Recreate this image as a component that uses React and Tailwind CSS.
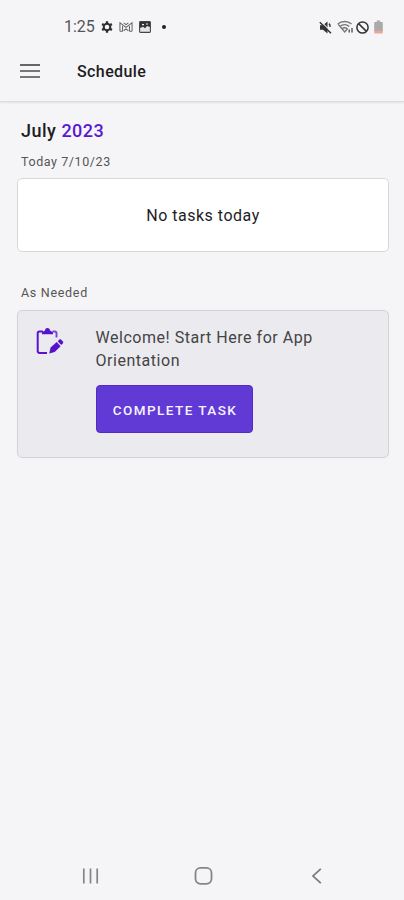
function StatusBar() {
  return (
    <div className="flex h-[44px] items-center pt-[10px] pl-[64px] pr-[21px] text-[#444]">
      <span className="w-[31px] whitespace-nowrap text-[16px] leading-[20px] text-[#555]">1:25</span>
      <svg className="ml-[6px] h-[12px] w-[12px]" viewBox="0 0 12 12" fill="none" stroke="#2d2d2d">
        <circle cx="6" cy="6" r="3.3" strokeWidth="2" />
        <path d="M6 .3v2M6 9.7v2M1.1 3.1l1.6 1M9.3 8l1.6 1M1.1 9l1.6-1M9.3 4l1.6-.9" strokeWidth="2.3" />
      </svg>
      <svg className="ml-[6px] h-[12px] w-[14px]" viewBox="0 0 15 12" fill="none" stroke="#666">
        <path d="M1 10.5v-9l6.5 5 6.5-5v9M3.8 10.5V5M11.2 10.5V5M1 10.5h3M11 10.5h3M5 1.5l2.5 2 2.5-2M5 10l2.5-2 2.5 2" strokeWidth="1.1" />
      </svg>
      <svg className="ml-[6px] h-[12px] w-[12px]" viewBox="0 0 12 12">
        <rect x=".6" y=".6" width="10.8" height="10.8" rx=".8" fill="#e4e4e6" stroke="#444" strokeWidth="1.1" />
        <path d="M1 1h10v5L8 5 6 7.2 4 5.8 1 7z" fill="#333" />
        <path d="M3 3h2v1.2H3zM7 2.5h2v1H7z" fill="#eee" />
      </svg>
      <span className="ml-[11px] h-[4px] w-[4px] rounded-full bg-[#222]" />
      <svg className="ml-auto h-[13px] w-[13px]" viewBox="0 0 13 13">
        <path d="M1 4.2h3l4.5-3.6v11.8L4 8.8H1z" fill="#333" />
        <path d="M2 .6 13 11.4" stroke="#f5f5f8" strokeWidth="1.1" />
        <path d="M.8 1.2 12 12.2M10 2.6c.9.8 1.2 1.9 1 3.2" fill="none" stroke="#333" strokeWidth="1.5" />
      </svg>
      <svg className="ml-[5px] h-[14px] w-[17px]" viewBox="0 0 17 14" fill="none" stroke="#777">
        <path d="M.8 4C4.5.7 10.8.7 14.5 4M3 6.5c2.7-2.4 6.6-2.4 9.3 0M5 8.8c1.6-1.3 3.7-1.3 5.3 0M1 4l6.7 8 3-3.5" strokeWidth="1.4" />
        <path d="M12.2 12.5V9.5M15 8v4.5" stroke="#555" strokeWidth="1.4" />
      </svg>
      <svg className="ml-[2px] h-[13px] w-[13px]" viewBox="0 0 13 13" fill="none" stroke="#333" strokeWidth="1.5">
        <circle cx="6.5" cy="6.5" r="5.6" />
        <path d="m2.6 2.6 7.8 7.8" />
      </svg>
      <svg className="ml-[5px] h-[14px] w-[9px]" viewBox="0 0 9 14">
        <path d="M2.8.5h3.4V2H8a.8.8 0 0 1 .8.8V11H.2V2.8A.8.8 0 0 1 1 2h1.8z" fill="#aaa" />
        <path d="M.2 10.8h8.6v1.7a1 1 0 0 1-1 1H1.2a1 1 0 0 1-1-1z" fill="#f1a493" />
      </svg>
    </div>
  );
}

function TaskIcon() {
  return (
    <svg className="mt-[16px] ml-[18px] h-[28px] w-[28px] shrink-0" viewBox="0 0 28 28" fill="none">
      <path d="M7 4.5H3.5a1.8 1.8 0 0 0-1.8 1.8v17.8a1.8 1.8 0 0 0 1.8 1.8H11" stroke="#5b14ce" strokeWidth="2" />
      <path d="M16.5 4.5h2.2a1.8 1.8 0 0 1 1.8 1.8v4.2" stroke="#7a44d4" strokeWidth="1.9" />
      <path d="M6 7.2V5.3l3-1.8C9.2 1.8 10.1 1 11.5 1s2.3.8 2.5 2.5l3 1.8v1.9z" fill="#5712cc" />
      <path d="m13.2 26.6 1.4-6 6.1-5.5 3.9 4.1-5.9 5.7z" fill="#5712cc" />
      <path d="m21.7 14.3 1.8-1.7c.6-.5 1.2-.5 1.8.1l1.6 1.7c.5.6.5 1.2 0 1.8l-1.7 1.7z" fill="#5712cc" />
    </svg>
  );
}

export default function App() {
  return (
    <div className="flex h-[900px] w-[404px] flex-col overflow-hidden bg-[#f5f5f8] font-['Roboto',sans-serif] text-[#1d1d1f]">
      <StatusBar />
      <header className="flex h-[58px] items-center border-b border-[#dcdcdf] pb-[2px] pl-[20px] shadow-[0_1px_2px_rgba(0,0,0,0.08)]">
        <div className="flex w-[20px] flex-col gap-[4px] pb-px">
          <span className="h-[2px] bg-[#666]" />
          <span className="h-[2px] bg-[#777]" />
          <span className="h-[2px] bg-[#777]" />
        </div>
        <h1 className="ml-[37px] pt-px text-[16px] leading-[20px] font-medium tracking-[0.4px]">Schedule</h1>
      </header>
      <main className="flex flex-1 flex-col pr-[15px] pl-[17px]">
        <h2 className="mt-[18px] ml-[4px] text-[18px] leading-[22px] font-medium tracking-[0.5px]">
          July <span className="text-[#5b18d0]">2023</span>
        </h2>
        <p className="mt-[11px] ml-[4px] text-[12.5px] leading-[17px] tracking-[0.58px] text-[#555]">Today 7/10/23</p>
        <section className="mt-[8px] flex h-[74px] items-center justify-center rounded-[5px] border border-[#d8d8da] bg-white pt-[2px] text-[16px] tracking-[0.5px]">
          No tasks today
        </section>
        <p className="mt-[33px] ml-[4px] text-[12.5px] leading-[16px] tracking-[0.7px] text-[#555]">As Needed</p>
        <section className="mt-[9px] flex h-[148px] rounded-[5px] border border-[#d3d3d6] bg-[#ebeaef]">
          <TaskIcon />
          <div className="ml-[31.5px] flex flex-col items-start pt-[15px]">
            <p className="w-[240px] text-[16px] leading-[23px] tracking-[0.53px] text-[#444]">
              Welcome! Start Here for App<br />Orientation
            </p>
            <button className="mt-[13px] h-[48px] w-[157px] rounded-[4px] border border-[#532bc4] bg-[#613ad6] pt-[2px] pl-[2px] text-[13.5px] font-medium tracking-[1.45px] whitespace-nowrap text-[#f6f3fd]">
              COMPLETE TASK
            </button>
          </div>
        </section>
      </main>
      <nav className="flex h-[48px] items-center pl-[82px]">
        <svg className="h-[18px] w-[18px]" viewBox="0 0 18 18" stroke="#858588" strokeWidth="1.7">
          <path d="M1.8 1.5v15M8.5 1.5v15M15.2 1.5v15" />
        </svg>
        <svg className="ml-[94px] h-[20px] w-[20px]" viewBox="0 0 20 20" fill="none" stroke="#858588" strokeWidth="1.8">
          <rect x="1.5" y="1.8" width="16" height="16" rx="5" />
        </svg>
        <svg className="ml-[97px] h-[18px] w-[12px]" viewBox="0 0 12 18" fill="none" stroke="#77777a" strokeWidth="1.7">
          <path d="M9.8 1.8 2 9l7.8 7.2" />
        </svg>
      </nav>
    </div>
  );
}
